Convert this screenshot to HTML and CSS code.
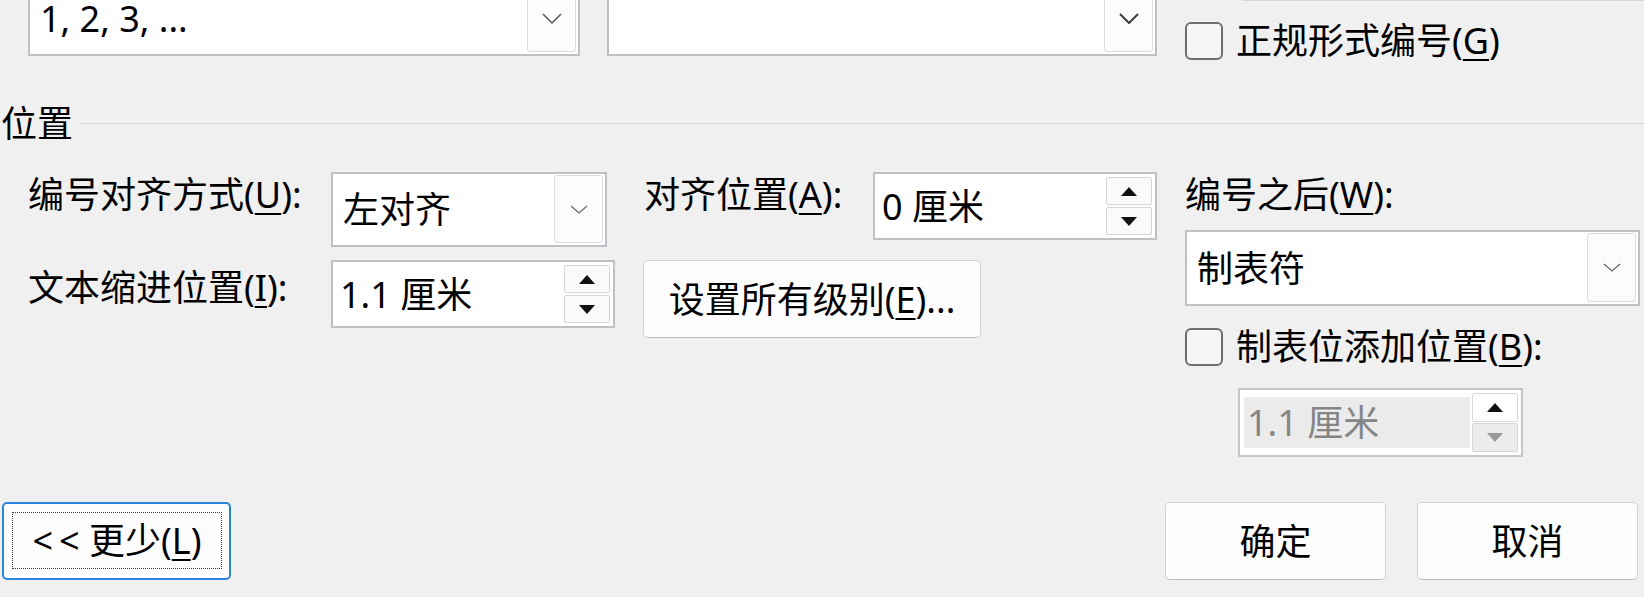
FILE: index.html
```html
<!DOCTYPE html>
<html lang="zh-CN">
	<head>
		<meta charset="UTF-8" />
		<meta name="viewport" content="width=device-width, initial-scale=1.0" />
		<title>定义新多级列表</title>
		<link rel="stylesheet" href="styles.css">
	</head>
	<body>
		<div class="top-row">
			<div class="select select-style">
				<span class="select-value"><span class="value-text">1, 2, 3, ...</span></span>
				<span class="drop-btn">
					<svg width="20" height="11" viewBox="0 0 20 11"><path d="M1 1l9 9 9-9" fill="none" stroke="#5a5a5a" stroke-width="1.5" /></svg>
				</span>
			</div>
			<div class="select select-level">
				<span class="select-value"></span>
				<span class="drop-btn">
					<svg width="20" height="11" viewBox="0 0 20 11"><path d="M1 1l9 9 9-9" fill="none" stroke="#3c3c3c" stroke-width="2" /></svg>
				</span>
			</div>
			<div class="top-side">
				<div class="prev-field"></div>
				<label class="check check-legal">
					<span class="box"></span>
					<span>正规形式编号(<u>G</u>)</span>
				</label>
			</div>
		</div>

		<div class="group-title">
			<span>位置</span>
			<span class="rule"></span>
		</div>

		<div class="position">
			<div class="fields">
				<div class="label row-1">编号对齐方式(<u>U</u>):</div>
				<div class="select select-align">
					<span class="select-value">左对齐</span>
					<span class="drop-btn">
						<svg width="20" height="11" viewBox="0 0 20 11"><path d="M2 2l8 7 8-7" fill="none" stroke="#6a6a6a" stroke-width="1.3" /></svg>
					</span>
				</div>
				<div class="label row-1">对齐位置(<u>A</u>):</div>
				<div class="spin">
					<span class="spin-value">0 厘米</span>
					<span class="spin-btns">
						<span class="spin-btn"><svg width="16" height="9" viewBox="0 0 16 9"><path d="M0 9L8 0l8 9z" /></svg></span>
						<span class="spin-btn"><svg width="16" height="9" viewBox="0 0 16 9"><path d="M0 0h16L8 9z" /></svg></span>
					</span>
				</div>

				<div class="label row-2">文本缩进位置(<u>I</u>):</div>
				<div class="spin">
					<span class="spin-value">1.1 厘米</span>
					<span class="spin-btns">
						<span class="spin-btn"><svg width="16" height="9" viewBox="0 0 16 9"><path d="M0 9L8 0l8 9z" /></svg></span>
						<span class="spin-btn"><svg width="16" height="9" viewBox="0 0 16 9"><path d="M0 0h16L8 9z" /></svg></span>
					</span>
				</div>
				<button class="btn btn-levels">设置所有级别(<u>E</u>)...</button>
			</div>

			<div class="after">
				<div class="label">编号之后(<u>W</u>):</div>
				<div class="select select-after">
					<span class="select-value">制表符</span>
					<span class="drop-btn">
						<svg width="20" height="11" viewBox="0 0 20 11"><path d="M2 2l8 7 8-7" fill="none" stroke="#6a6a6a" stroke-width="1.3" /></svg>
					</span>
				</div>
				<label class="check check-tab">
					<span class="box"></span>
					<span>制表位添加位置(<u>B</u>):</span>
				</label>
				<div class="spin spin-disabled">
					<span class="spin-value">1.1 厘米</span>
					<span class="spin-btns">
						<span class="spin-btn"><svg width="16" height="9" viewBox="0 0 16 9"><path d="M0 9L8 0l8 9z" /></svg></span>
						<span class="spin-btn off"><svg width="16" height="9" viewBox="0 0 16 9"><path d="M0 0h16L8 9z" /></svg></span>
					</span>
				</div>
			</div>
		</div>

		<div class="footer">
			<button class="btn btn-less"><span class="focus">&lt;&#8201;&lt; 更少(<u>L</u>)</span></button>
			<div class="footer-right">
				<button class="btn btn-wide">确定</button>
				<button class="btn btn-wide">取消</button>
			</div>
		</div>
	</body>
</html>
```

FILE: styles.css
```css
body {
	margin: 0;
	width: 1644px;
	height: 597px;
	overflow: hidden;
	background-color: #f0f0f0;
	color: #000;
	font-family: "Noto Sans", "Noto Sans CJK SC", sans-serif;
	font-size: 36px;
	line-height: 43px;
}
u {
	text-underline-offset: 5px;
	text-decoration-thickness: 2px;
}

/* selects */
.select {
	box-sizing: border-box;
	display: flex;
	background: white;
	border: 2px solid #bfbfc6;
}
.select-value {
	flex: 1;
	display: flex;
	align-items: center;
	padding-left: 10px;
	white-space: nowrap;
}
.drop-btn {
	box-sizing: border-box;
	width: 49px;
	margin: 1px 2px 2px 0;
	display: flex;
	align-items: center;
	justify-content: center;
	background: #fcfcfc;
	border: 1px solid #dcdcdc;
	border-radius: 3px;
}

/* top row (scrolled off) */
.top-row {
	display: flex;
	align-items: flex-start;
	margin-top: -19px;
}
.select-style {
	width: 552px;
	height: 75px;
	margin-left: 28px;
}
.value-text {
	display: block;
	line-height: 30px;
}
.select-level {
	width: 550px;
	height: 75px;
	margin-left: 27px;
}
.top-side {
	flex: 1;
	margin-left: 28px;
}
.prev-field {
	height: 19px;
	margin-left: 57px;
	border-bottom: 1px solid #d6d6d6;
}

/* checkboxes */
.check {
	display: flex;
	align-items: center;
	height: 43px;
	white-space: nowrap;
}
.check-legal {
	margin-top: 18px;
}
.box {
	box-sizing: border-box;
	width: 38px;
	height: 38px;
	margin-right: 13px;
	border: 2px solid #6e6e6e;
	border-radius: 6px;
	background: #f6f6f6;
}

/* group title */
.group-title {
	display: flex;
	align-items: center;
	height: 43px;
	margin-top: 40px;
	padding-left: 1px;
}
.rule {
	flex: 1;
	height: 1px;
	margin-left: 8px;
	background: #d7d7d7;
}

.position {
	display: flex;
	margin-top: 27px;
}
.fields {
	display: grid;
	grid-template-columns: 274px 284px 200px 284px;
	grid-template-rows: 75px 78px;
	column-gap: 29px;
	row-gap: 13px;
	align-items: start;
	margin-left: 28px;
}
.label {
	white-space: nowrap;
}
.label.row-1 {
	margin-top: 1px;
}
.label.row-2 {
	margin-top: 6px;
}
.select-align {
	width: 276px;
	height: 75px;
}

/* spin boxes */
.spin {
	box-sizing: border-box;
	display: flex;
	width: 284px;
	height: 68px;
	background: white;
	border: 2px solid #bfbfc6;
}
.spin-value {
	flex: 1;
	display: flex;
	align-items: center;
	padding-left: 7px;
	white-space: nowrap;
}
.spin-btns {
	width: 46px;
	margin: 3px 3px 3px 0;
	display: flex;
	flex-direction: column;
	gap: 2px;
}
.spin-btn {
	box-sizing: border-box;
	flex: 1;
	display: flex;
	align-items: center;
	justify-content: center;
	background: #fafafa;
	border: 1px solid #d6d6d6;
	border-radius: 2px;
}
.spin-btn svg {
	fill: #111;
}

/* buttons */
.btn {
	box-sizing: border-box;
	height: 78px;
	padding: 0;
	font: inherit;
	color: #000;
	background: #fdfdfd;
	border: 1px solid #d2d2d2;
	border-bottom-color: #bdbdbd;
	border-radius: 5px;
}
.btn-levels {
	grid-column: 3 / span 2;
	justify-self: start;
	width: 338px;
	margin-left: -1px;
}

/* right column */
.after {
	display: flex;
	flex-direction: column;
	align-items: flex-start;
	width: 455px;
	margin-left: 28px;
}
.after .label {
	margin-top: 1px;
}
.select-after {
	width: 455px;
	height: 76px;
	margin-top: 14px;
}
.check-tab {
	margin-top: 19px;
}
.spin-disabled {
	width: 285px;
	height: 69px;
	margin-top: 20px;
	margin-left: 53px;
	border-color: #c6c6c6;
}
.spin-disabled .spin-value {
	margin: 7px 2px 7px 4px;
	padding-left: 3px;
	background: #ebebeb;
	color: #858585;
}
.spin-disabled .spin-btns {
	gap: 1px;
}
.spin-disabled .spin-btn {
	background: white;
}
.spin-disabled .spin-btn.off {
	background: #ececec;
}
.spin-disabled .spin-btn.off svg {
	fill: #9a9a9a;
}

/* footer */
.footer {
	display: flex;
	justify-content: space-between;
	margin-top: 45px;
	padding: 0 6px 0 2px;
}
.footer-right {
	display: flex;
	gap: 31px;
}
.btn-wide {
	width: 221px;
}
.btn-less {
	width: 229px;
	padding: 8px 7px 9px 8px;
	border: 2px solid #2a86d8;
}
.focus {
	box-sizing: border-box;
	display: flex;
	align-items: center;
	justify-content: center;
	height: 100%;
	border: 1px dotted #3a3a3a;
}
```
